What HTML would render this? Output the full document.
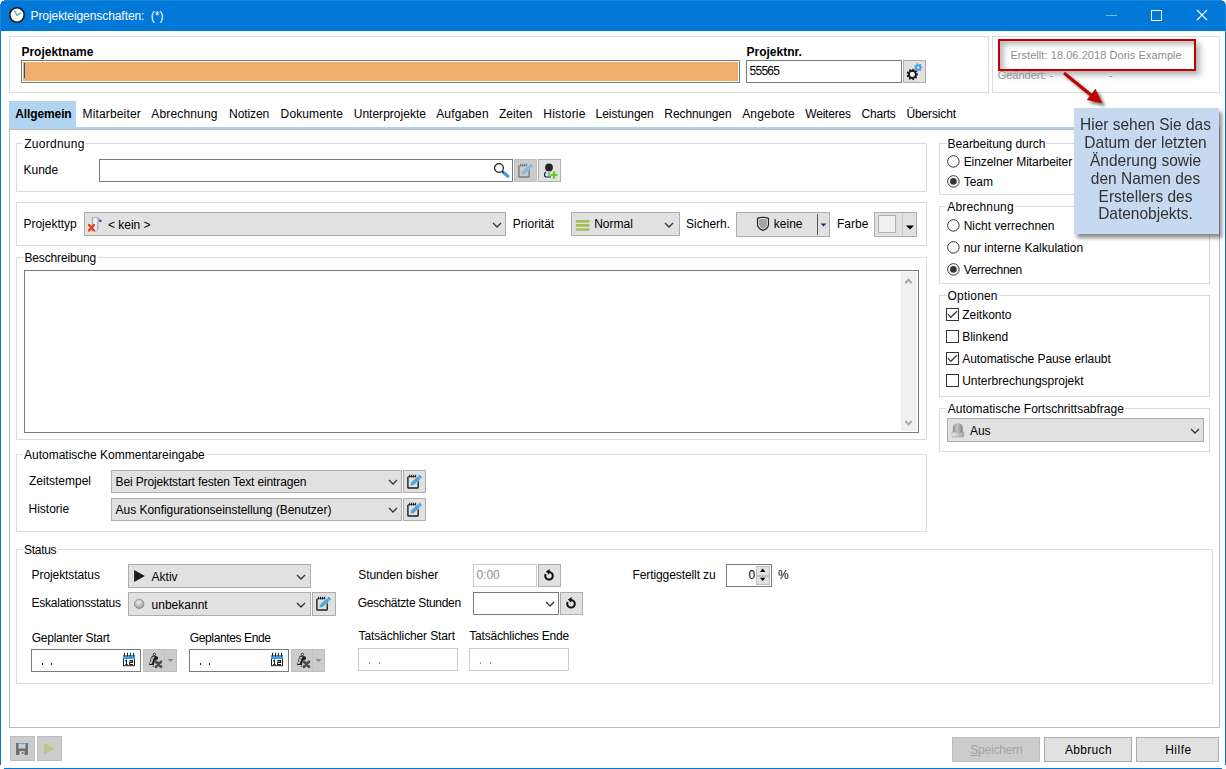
<!DOCTYPE html>
<html><head><meta charset="utf-8"><style>
html,body{margin:0;padding:0}
body{width:1226px;height:769px;position:relative;overflow:hidden;background:#fff;font-family:"Liberation Sans",sans-serif;font-size:12px;color:#000}
.a{position:absolute;box-sizing:border-box}
.t{position:absolute;white-space:pre;font-size:12px;line-height:12px}
svg{overflow:visible}
</style></head><body>
<div class="a" style="left:0px;top:0px;width:1226px;height:31px;background:#0078d7;border:1px solid #1b85d9;border-bottom:none;"></div>
<div class="a" style="left:0px;top:0px;width:4px;height:1px;background:#fff;"></div>
<div class="a" style="left:0px;top:1px;width:2px;height:1px;background:#fff;"></div>
<div class="a" style="left:0px;top:2px;width:1px;height:2px;background:#fff;"></div>
<div class="a" style="left:1222px;top:0px;width:4px;height:1px;background:#fff;"></div>
<div class="a" style="left:1224px;top:1px;width:2px;height:1px;background:#fff;"></div>
<div class="a" style="left:1225px;top:2px;width:1px;height:2px;background:#fff;"></div>
<div class="a" style="left:0px;top:31px;width:1px;height:734px;background:#0078d7;"></div>
<div class="a" style="left:1225px;top:31px;width:1px;height:734px;background:#0078d7;"></div>
<div class="a" style="left:4px;top:768px;width:1218px;height:1px;background:#0078d7;"></div>
<svg class="a" style="left:8px;top:6px" width="18" height="18" viewBox="0 0 18 18"><circle cx="9" cy="9" r="7.2" fill="#fff" stroke="#1a1a1a" stroke-width="1.6"/><path d="M6.3 4.6 L9 9.3 L12.8 6.9" fill="none" stroke="#4cb5ae" stroke-width="1.3"/></svg>
<div class="t" style="left:30.5px;top:10.04px;color:#fff;letter-spacing:-0.074px;">Projekteigenschaften:&nbsp; (*)</div>
<div class="a" style="left:1106px;top:15px;width:11px;height:1px;background:rgba(255,255,255,0.5);"></div>
<div class="a" style="left:1151px;top:10px;width:11px;height:11px;background:transparent;border:1px solid #fff;"></div>
<svg class="a" style="left:1196px;top:9px" width="12" height="12" viewBox="0 0 12 12"><path d="M1 1 L11 11 M11 1 L1 11" stroke="#fff" stroke-width="1.1"/></svg>
<div class="a" style="left:9px;top:36px;width:980px;height:57px;background:#fff;border:1px solid #dcdcdc;"></div>
<div class="t" style="left:21.4px;top:45.74px;font-weight:bold;">Projektname</div>
<div class="a" style="left:21px;top:60px;width:719px;height:23px;background:#fff;border:1px solid #7a7a7a;"></div>
<div class="a" style="left:23px;top:62px;width:715px;height:19px;background:#efae6c;"></div>
<div class="a" style="left:24px;top:63px;width:1px;height:15px;background:#1c4f9c;"></div>
<div class="t" style="left:746.5px;top:45.74px;font-weight:bold;">Projektnr.</div>
<div class="a" style="left:746px;top:60px;width:156px;height:23px;background:#fff;border:1px solid #7a7a7a;"></div>
<div class="t" style="left:749.5px;top:64.64px;letter-spacing:-0.717px;">55565</div>
<div class="a" style="left:903px;top:60px;width:23px;height:23px;background:#e1e1e1;border:1px solid #adadad;"></div>
<svg class="a" style="left:903px;top:60px" width="23" height="23" viewBox="0 0 23 23"><circle cx="9.3" cy="14.4" r="3.5" fill="none" stroke="#1e1e1e" stroke-width="2.2"/><path d="M12.80 14.40 L15.00 14.40" stroke="#1e1e1e" stroke-width="1.8"/><path d="M11.98 16.65 L13.67 18.06" stroke="#1e1e1e" stroke-width="1.8"/><path d="M9.91 17.85 L10.29 20.01" stroke="#1e1e1e" stroke-width="1.8"/><path d="M7.55 17.43 L6.45 19.34" stroke="#1e1e1e" stroke-width="1.8"/><path d="M6.01 15.60 L3.94 16.35" stroke="#1e1e1e" stroke-width="1.8"/><path d="M6.01 13.20 L3.94 12.45" stroke="#1e1e1e" stroke-width="1.8"/><path d="M7.55 11.37 L6.45 9.46" stroke="#1e1e1e" stroke-width="1.8"/><path d="M9.91 10.95 L10.29 8.79" stroke="#1e1e1e" stroke-width="1.8"/><path d="M11.98 12.15 L13.67 10.74" stroke="#1e1e1e" stroke-width="1.8"/><circle cx="9.3" cy="14.4" r="2.4" fill="#f4f4f4"/><circle cx="15.1" cy="7.5" r="2.05" fill="none" stroke="#3d9ee0" stroke-width="1.7"/><path d="M17.15 7.50 L19.20 7.50" stroke="#3d9ee0" stroke-width="1.6"/><path d="M16.38 9.10 L17.66 10.71" stroke="#3d9ee0" stroke-width="1.6"/><path d="M14.64 9.50 L14.19 11.50" stroke="#3d9ee0" stroke-width="1.6"/><path d="M13.25 8.39 L11.41 9.28" stroke="#3d9ee0" stroke-width="1.6"/><path d="M13.25 6.61 L11.41 5.72" stroke="#3d9ee0" stroke-width="1.6"/><path d="M14.64 5.50 L14.19 3.50" stroke="#3d9ee0" stroke-width="1.6"/><path d="M16.38 5.90 L17.66 4.29" stroke="#3d9ee0" stroke-width="1.6"/><circle cx="15.1" cy="7.5" r="1.2" fill="#e1e1e1"/></svg>
<div class="a" style="left:992px;top:36px;width:228px;height:57px;background:#fff;border:1px solid #dcdcdc;"></div>
<div class="a" style="left:998px;top:39px;width:198px;height:32px;background:transparent;border:2px solid #c00000;box-shadow:4px 4px 6px rgba(0,0,0,0.3), inset 4px 4px 5px rgba(0,0,0,0.25);"></div>
<div class="t" style="left:1010.4px;top:50.09px;font-size:11px;line-height:11px;color:#8e8e8e;letter-spacing:0.059px;">Erstellt: 18.06.2018 Doris Example</div>
<div class="t" style="left:997.7px;top:69.99px;font-size:11px;line-height:11px;color:#959595;">Geändert: -</div>
<div class="t" style="left:1109px;top:69.99px;font-size:11px;line-height:11px;color:#959595;">-</div>
<svg class="a" style="left:1050px;top:60px" width="70" height="60" viewBox="0 0 70 60"><defs><filter id="sh" x="-30%" y="-30%" width="160%" height="160%"><feGaussianBlur stdDeviation="1.6"/></filter></defs><g transform="translate(3,3)" opacity="0.5" filter="url(#sh)"><path d="M14 13 L41 35" stroke="#000" stroke-width="3"/><path d="M52.3 43.3 L45.5 28.7 L36.7 40.1 Z" fill="#000"/></g><path d="M14 13 L41 35" stroke="#c00000" stroke-width="3"/><path d="M52.3 43.3 L45.5 28.7 L36.7 40.1 Z" fill="#c00000"/></svg>
<div class="a" style="left:9px;top:101px;width:67px;height:28px;background:#b1d5f1;"></div>
<div class="a" style="left:76px;top:127px;width:1144px;height:2px;background:#aad3f0;"></div>
<div class="a" style="left:9px;top:129px;width:1211px;height:1px;background:#b9b9b9;"></div>
<div class="a" style="left:9px;top:129px;width:1px;height:599px;background:#bcbcbc;"></div>
<div class="a" style="left:1219px;top:129px;width:1px;height:599px;background:#bcbcbc;"></div>
<div class="a" style="left:9px;top:727px;width:1211px;height:1px;background:#bcbcbc;"></div>
<div class="t" style="left:15.3px;top:107.74px;font-weight:bold;letter-spacing:-0.118px;">Allgemein</div>
<div class="t" style="left:82.5px;top:107.74px;letter-spacing:0.152px;">Mitarbeiter</div>
<div class="t" style="left:151.3px;top:107.74px;letter-spacing:0.154px;">Abrechnung</div>
<div class="t" style="left:229.1px;top:107.74px;letter-spacing:-0.081px;">Notizen</div>
<div class="t" style="left:280.6px;top:107.74px;letter-spacing:0.117px;">Dokumente</div>
<div class="t" style="left:353.7px;top:107.74px;letter-spacing:0.022px;">Unterprojekte</div>
<div class="t" style="left:436.2px;top:107.74px;letter-spacing:0.146px;">Aufgaben</div>
<div class="t" style="left:498.9px;top:107.74px;letter-spacing:0.050px;">Zeiten</div>
<div class="t" style="left:543.3px;top:107.74px;letter-spacing:0.204px;">Historie</div>
<div class="t" style="left:595.6px;top:107.74px;letter-spacing:-0.057px;">Leistungen</div>
<div class="t" style="left:664.3px;top:107.74px;letter-spacing:-0.084px;">Rechnungen</div>
<div class="t" style="left:742.2px;top:107.74px;letter-spacing:0.174px;">Angebote</div>
<div class="t" style="left:805.3px;top:107.74px;letter-spacing:-0.218px;">Weiteres</div>
<div class="t" style="left:861.5px;top:107.74px;letter-spacing:-0.209px;">Charts</div>
<div class="t" style="left:906.4px;top:107.74px;letter-spacing:-0.123px;">Übersicht</div>
<div class="a" style="left:16px;top:143px;width:911px;height:49px;background:transparent;border:1px solid #dcdcdc;"></div>
<div class="t" style="left:23.2px;top:137.94px;background:#fff;padding:0 1px;letter-spacing:0.270px;">Zuordnung</div>
<div class="t" style="left:23.5px;top:163.64px;">Kunde</div>
<div class="a" style="left:99px;top:159px;width:414px;height:23px;background:#fff;border:1px solid #7a7a7a;"></div>
<svg class="a" style="left:492px;top:161px" width="17" height="18" viewBox="0 0 17 18"><circle cx="7" cy="7" r="4.4" fill="none" stroke="#1a1a1a" stroke-width="1.2"/><path d="M11.4 11.6 L15.9 15.2" stroke="#3d9ee0" stroke-width="3.2" stroke-linecap="round"/><path d="M10.1 10.1 L11.8 11.8" stroke="#1a1a1a" stroke-width="1.2"/></svg>
<div class="a" style="left:514px;top:159px;width:23px;height:23px;background:#cccccc;border:1px solid #bfbfbf;"></div>
<svg class="a" style="left:515px;top:160px" width="21" height="21" viewBox="0 0 21 21"><path d="M3.9 6 L3.9 16.2 Q3.9 17 4.7 17 L13.4 17 Q14.2 17 14.2 16.2 L14.2 9" fill="none" stroke="#7a7a7a" stroke-width="1.4"/><path d="M3.9 5.6 L11 5.6" stroke="#7a7a7a" stroke-width="0.8"/><path d="M5.6 3.8 L5.6 6.4 M7.6 3.8 L7.6 6.4 M9.6 3.8 L9.6 6.4 M11.6 3.8 L11.6 6.4" stroke="#7a7a7a" stroke-width="1.1"/><path d="M6.2 14.8 L7.1 11.3 L15.6 3.4 L18.3 6.3 L9.8 14.2 Z" fill="#82b4dc" stroke="#cccccc" stroke-width="0.6"/><path d="M13.9 5.2 L16.5 8" stroke="#cccccc" stroke-width="0.8"/><path d="M8.6 12.6 L13.8 7.8" stroke="#cccccc" stroke-width="0.6" stroke-dasharray="1 1"/></svg>
<div class="a" style="left:538px;top:159px;width:23px;height:23px;background:#e1e1e1;border:1px solid #adadad;"></div>
<svg class="a" style="left:539px;top:160px" width="21" height="21" viewBox="0 0 21 21"><circle cx="10" cy="7.4" r="3.9" fill="#222"/><path d="M7 12 C5 12.8 5 16.6 7.2 17" fill="none" stroke="#222" stroke-width="1.3"/><path d="M7.2 17 L12 17" stroke="#222" stroke-width="1"/><path d="M10 11.6 L10 17.4" stroke="#4aa3e0" stroke-width="1.2"/><path d="M15 11.6 L15 18.4 M11.6 15 L18.4 15" stroke="#5ccf0f" stroke-width="2.2"/></svg>
<div class="a" style="left:16px;top:202px;width:911px;height:44px;background:transparent;border:1px solid #dcdcdc;"></div>
<div class="t" style="left:23.4px;top:218.24px;">Projekttyp</div>
<div class="a" style="left:84px;top:212px;width:422px;height:24px;background:#e1e1e1;border:1px solid #adadad;"></div>
<svg class="a" style="left:84px;top:212px" width="24" height="24" viewBox="0 0 24 24"><defs><linearGradient id="pp" x1="0" x2="1"><stop offset="0" stop-color="#cfd0e6"/><stop offset="0.5" stop-color="#ffffff"/><stop offset="1" stop-color="#a8a9c8"/></linearGradient></defs><path d="M8.5 5.8 C10.5 5 13 5.2 15 6.5 L14.2 9 L13.6 17.5 C13.2 18.8 12 19 11 18.6 L8 18.4 Z" fill="url(#pp)" stroke="#8e90b6" stroke-width="0.7"/><ellipse cx="16.3" cy="8.8" rx="1.5" ry="1.4" fill="#5a5c8c"/><path d="M5 13 L10 18.5 M10 13 L5 18.5" stroke="#e4421a" stroke-width="2.4" stroke-linecap="round"/></svg>
<div class="t" style="left:107.9px;top:218.54px;">&lt; kein &gt;</div>
<svg class="a" style="left:491.5px;top:221.5px" width="10" height="6" viewBox="0 0 10 6"><path d="M1 1 L5 5 L9 1" fill="none" stroke="#333" stroke-width="1.25"/></svg>
<div class="t" style="left:512.8px;top:217.94px;">Priorität</div>
<div class="a" style="left:571px;top:212px;width:109px;height:24px;background:#e1e1e1;border:1px solid #adadad;"></div>
<svg class="a" style="left:571px;top:212px" width="24" height="24" viewBox="0 0 24 24"><path d="M5.8 9.4 L17.4 9.4 M5.8 13.4 L17.4 13.4 M5.8 17.5 L17.4 17.5" stroke="#9fc258" stroke-width="2.6" stroke-linecap="round"/></svg>
<div class="t" style="left:594.2px;top:218.14px;">Normal</div>
<svg class="a" style="left:664px;top:221.5px" width="10" height="6" viewBox="0 0 10 6"><path d="M1 1 L5 5 L9 1" fill="none" stroke="#333" stroke-width="1.25"/></svg>
<div class="t" style="left:686.1px;top:217.64px;">Sicherh.</div>
<div class="a" style="left:736px;top:212px;width:94px;height:25px;background:#e1e1e1;border:1px solid #adadad;"></div>
<div class="a" style="left:817px;top:214px;width:1px;height:21px;background:#555;"></div>
<svg class="a" style="left:750px;top:212px" width="24" height="24" viewBox="0 0 24 24"><path d="M7.6 6.3 Q13 4.4 18.4 6.3 L18.4 12.8 Q18.4 16.2 13 18.4 Q7.6 16.2 7.6 12.8 Z" fill="#fff" stroke="#222" stroke-width="1.3"/><path d="M9.1 7.4 Q13 6.1 16.9 7.4 L16.9 12.7 Q16.9 15.2 13 17 Q9.1 15.2 9.1 12.7 Z" fill="#a2a2a2"/></svg>
<div class="t" style="left:773.8px;top:218.24px;">keine</div>
<svg class="a" style="left:820px;top:222px" width="7" height="5" viewBox="0 0 7 5"><path d="M0.5 1.5 L6.5 1.5 L3.5 4.5 Z" fill="#1f2a8a"/></svg>
<div class="t" style="left:837px;top:217.64px;">Farbe</div>
<div class="a" style="left:874px;top:212px;width:43px;height:25px;background:#e1e1e1;border:1px solid #adadad;"></div>
<div class="a" style="left:878px;top:215px;width:18px;height:18px;background:#f0f0f0;border:1px solid #b0b0b0;"></div>
<div class="a" style="left:902px;top:213px;width:1px;height:23px;background:#c8c8c8;"></div>
<svg class="a" style="left:905px;top:224px" width="10" height="6" viewBox="0 0 10 6"><path d="M1 1.5 L9 1.5 L5 5.5 Z" fill="#000"/></svg>
<div class="a" style="left:16px;top:257px;width:911px;height:183px;background:transparent;border:1px solid #dcdcdc;"></div>
<div class="t" style="left:23.5px;top:251.74px;background:#fff;padding:0 1px;letter-spacing:-0.153px;">Beschreibung</div>
<div class="a" style="left:24px;top:270px;width:895px;height:163px;background:#fff;border:1px solid #7a7a7a;"></div>
<div class="a" style="left:901px;top:272px;width:16px;height:159px;background:#f0f0f0;"></div>
<svg class="a" style="left:903px;top:276px" width="11" height="9" viewBox="0 0 11 9"><path d="M2.4 7.2 L5.5 3.8 L8.6 7.2" fill="none" stroke="#a6a6a6" stroke-width="2"/></svg>
<svg class="a" style="left:903px;top:419px" width="11" height="9" viewBox="0 0 11 9"><path d="M2.4 2 L5.5 5.4 L8.6 2" fill="none" stroke="#ababab" stroke-width="2"/></svg>
<div class="a" style="left:16px;top:454px;width:911px;height:78px;background:transparent;border:1px solid #dcdcdc;"></div>
<div class="t" style="left:23px;top:448.84px;background:#fff;padding:0 1px;">Automatische Kommentareingabe</div>
<div class="t" style="left:29px;top:474.64px;">Zeitstempel</div>
<div class="a" style="left:111px;top:470px;width:291px;height:23px;background:#e1e1e1;border:1px solid #adadad;"></div>
<div class="t" style="left:115.6px;top:475.84px;letter-spacing:-0.137px;">Bei Projektstart festen Text eintragen</div>
<svg class="a" style="left:388px;top:478.5px" width="10" height="6" viewBox="0 0 10 6"><path d="M1 1 L5 5 L9 1" fill="none" stroke="#333" stroke-width="1.25"/></svg>
<div class="a" style="left:403px;top:470px;width:23px;height:23px;background:#e1e1e1;border:1px solid #adadad;"></div>
<svg class="a" style="left:404px;top:471px" width="21" height="21" viewBox="0 0 21 21"><path d="M3.9 6 L3.9 16.2 Q3.9 17 4.7 17 L13.4 17 Q14.2 17 14.2 16.2 L14.2 9" fill="none" stroke="#1e1e1e" stroke-width="1.4"/><path d="M3.9 5.6 L11 5.6" stroke="#1e1e1e" stroke-width="0.8"/><path d="M5.6 3.8 L5.6 6.4 M7.6 3.8 L7.6 6.4 M9.6 3.8 L9.6 6.4 M11.6 3.8 L11.6 6.4" stroke="#1e1e1e" stroke-width="1.1"/><path d="M6.2 14.8 L7.1 11.3 L15.6 3.4 L18.3 6.3 L9.8 14.2 Z" fill="#3d9ee0" stroke="#e1e1e1" stroke-width="0.6"/><path d="M13.9 5.2 L16.5 8" stroke="#e1e1e1" stroke-width="0.8"/><path d="M8.6 12.6 L13.8 7.8" stroke="#e1e1e1" stroke-width="0.6" stroke-dasharray="1 1"/></svg>
<div class="t" style="left:28.5px;top:502.54px;">Historie</div>
<div class="a" style="left:111px;top:498px;width:291px;height:23px;background:#e1e1e1;border:1px solid #adadad;"></div>
<div class="t" style="left:115.6px;top:503.84px;letter-spacing:-0.043px;">Aus Konfigurationseinstellung (Benutzer)</div>
<svg class="a" style="left:388px;top:506.5px" width="10" height="6" viewBox="0 0 10 6"><path d="M1 1 L5 5 L9 1" fill="none" stroke="#333" stroke-width="1.25"/></svg>
<div class="a" style="left:403px;top:498px;width:23px;height:23px;background:#e1e1e1;border:1px solid #adadad;"></div>
<svg class="a" style="left:404px;top:499px" width="21" height="21" viewBox="0 0 21 21"><path d="M3.9 6 L3.9 16.2 Q3.9 17 4.7 17 L13.4 17 Q14.2 17 14.2 16.2 L14.2 9" fill="none" stroke="#1e1e1e" stroke-width="1.4"/><path d="M3.9 5.6 L11 5.6" stroke="#1e1e1e" stroke-width="0.8"/><path d="M5.6 3.8 L5.6 6.4 M7.6 3.8 L7.6 6.4 M9.6 3.8 L9.6 6.4 M11.6 3.8 L11.6 6.4" stroke="#1e1e1e" stroke-width="1.1"/><path d="M6.2 14.8 L7.1 11.3 L15.6 3.4 L18.3 6.3 L9.8 14.2 Z" fill="#3d9ee0" stroke="#e1e1e1" stroke-width="0.6"/><path d="M13.9 5.2 L16.5 8" stroke="#e1e1e1" stroke-width="0.8"/><path d="M8.6 12.6 L13.8 7.8" stroke="#e1e1e1" stroke-width="0.6" stroke-dasharray="1 1"/></svg>
<div class="a" style="left:16px;top:549px;width:1197px;height:135px;background:transparent;border:1px solid #dcdcdc;"></div>
<div class="t" style="left:23px;top:543.54px;background:#fff;padding:0 1px;letter-spacing:-0.284px;">Status</div>
<div class="t" style="left:31.6px;top:568.74px;letter-spacing:-0.089px;">Projektstatus</div>
<div class="a" style="left:128px;top:564px;width:183px;height:24px;background:#e1e1e1;border:1px solid #adadad;"></div>
<svg class="a" style="left:128px;top:564px" width="24" height="24" viewBox="0 0 24 24"><path d="M6.1 6.1 L16.9 12 L6.1 17.9 Z" fill="#1a1a1a"/></svg>
<div class="t" style="left:151.6px;top:571.04px;">Aktiv</div>
<svg class="a" style="left:296px;top:574px" width="10" height="6" viewBox="0 0 10 6"><path d="M1 1 L5 5 L9 1" fill="none" stroke="#333" stroke-width="1.25"/></svg>
<div class="t" style="left:31.6px;top:597.24px;letter-spacing:-0.249px;">Eskalationsstatus</div>
<div class="a" style="left:128px;top:592px;width:183px;height:24px;background:#e1e1e1;border:1px solid #adadad;"></div>
<svg class="a" style="left:128px;top:592px" width="24" height="24" viewBox="0 0 24 24"><defs><radialGradient id="ball" cx="45%" cy="35%" r="70%"><stop offset="0" stop-color="#f2f2f2"/><stop offset="1" stop-color="#8c8c8c"/></radialGradient></defs><circle cx="11.2" cy="11.9" r="4.7" fill="url(#ball)" stroke="#808080" stroke-width="0.7"/></svg>
<div class="t" style="left:151.6px;top:598.64px;">unbekannt</div>
<svg class="a" style="left:296px;top:602px" width="10" height="6" viewBox="0 0 10 6"><path d="M1 1 L5 5 L9 1" fill="none" stroke="#333" stroke-width="1.25"/></svg>
<div class="a" style="left:312px;top:592px;width:24px;height:24px;background:#e1e1e1;border:1px solid #adadad;"></div>
<svg class="a" style="left:313px;top:593px" width="21" height="21" viewBox="0 0 21 21"><path d="M3.9 6 L3.9 16.2 Q3.9 17 4.7 17 L13.4 17 Q14.2 17 14.2 16.2 L14.2 9" fill="none" stroke="#1e1e1e" stroke-width="1.4"/><path d="M3.9 5.6 L11 5.6" stroke="#1e1e1e" stroke-width="0.8"/><path d="M5.6 3.8 L5.6 6.4 M7.6 3.8 L7.6 6.4 M9.6 3.8 L9.6 6.4 M11.6 3.8 L11.6 6.4" stroke="#1e1e1e" stroke-width="1.1"/><path d="M6.2 14.8 L7.1 11.3 L15.6 3.4 L18.3 6.3 L9.8 14.2 Z" fill="#3d9ee0" stroke="#e1e1e1" stroke-width="0.6"/><path d="M13.9 5.2 L16.5 8" stroke="#e1e1e1" stroke-width="0.8"/><path d="M8.6 12.6 L13.8 7.8" stroke="#e1e1e1" stroke-width="0.6" stroke-dasharray="1 1"/></svg>
<div class="t" style="left:31.7px;top:631.84px;letter-spacing:-0.234px;">Geplanter Start</div>
<div class="a" style="left:31px;top:649px;width:110px;height:23px;background:#fff;border:1px solid #7a7a7a;"></div>
<div class="a" style="left:42px;top:663px;width:1px;height:2px;background:#3a0a2a;"></div>
<div class="a" style="left:51px;top:663px;width:1px;height:2px;background:#3a0a2a;"></div>
<svg class="a" style="left:122px;top:651px" width="16" height="17" viewBox="0 0 16 17"><rect x="1.5" y="7.5" width="11" height="7.2" fill="#fff" stroke="#1e1e1e" stroke-width="1"/><rect x="1" y="4" width="12" height="4" fill="#3d9ee0"/><path d="M2.5 2.2 L2.5 5 M5.5 2.2 L5.5 5 M8.4 2.2 L8.4 5 M11.5 2.2 L11.5 5" stroke="#1e1e1e" stroke-width="1" stroke-linecap="round"/><path d="M3.3 10 L4.5 9.3 L4.5 13.5 M3.3 13.5 L5.7 13.5 M7.4 9.6 L10.6 9.6 L10.6 11.4 L7.6 11.4 L7.6 13.5 L11 13.5" fill="none" stroke="#1e1e1e" stroke-width="1.1"/></svg>
<div class="a" style="left:143px;top:649px;width:34px;height:23px;background:#cccccc;border:1px solid #bfbfbf;"></div>
<div class="a" style="left:164px;top:650px;width:1px;height:21px;background:#c4c4c4;"></div>
<svg class="a" style="left:143px;top:649px" width="21" height="23" viewBox="0 0 21 23"><path d="M9.8 6.6 C11.5 6.2 14 7 15 8.2 L15 10.2 L12 11.6 L10.8 15.9 L6 15.9 C6.5 14.5 7 12 7.6 10 C8.2 8 8.8 7 9.8 6.6 Z" fill="#1e1e1e"/><path d="M9.6 7.9 C8.8 9.2 8.2 12 7.3 15" stroke="#d8d8d8" stroke-width="1" fill="none"/><path d="M11.2 7.5 C10 9.2 9.1 12 8.4 14.6" stroke="#fff" stroke-width="0.9" fill="none"/><circle cx="11.4" cy="5.4" r="1.1" fill="#fff" stroke="#1e1e1e" stroke-width="0.9"/><circle cx="10.3" cy="17.2" r="0.6" fill="#1e1e1e"/><path d="M13 12.8 L18 17.8 M18 12.8 L13 17.8" stroke="#4d4d4d" stroke-width="2.8" stroke-linecap="round"/></svg>
<svg class="a" style="left:167px;top:658px" width="7" height="5" viewBox="0 0 7 5"><path d="M0.5 1 L6.5 1 L3.5 4 Z" fill="#8a8a8a"/></svg>
<div class="t" style="left:189.8px;top:631.84px;letter-spacing:-0.374px;">Geplantes Ende</div>
<div class="a" style="left:189px;top:649px;width:100px;height:23px;background:#fff;border:1px solid #7a7a7a;"></div>
<div class="a" style="left:200px;top:663px;width:1px;height:2px;background:#3a0a2a;"></div>
<div class="a" style="left:209px;top:663px;width:1px;height:2px;background:#3a0a2a;"></div>
<svg class="a" style="left:270px;top:651px" width="16" height="17" viewBox="0 0 16 17"><rect x="1.5" y="7.5" width="11" height="7.2" fill="#fff" stroke="#1e1e1e" stroke-width="1"/><rect x="1" y="4" width="12" height="4" fill="#3d9ee0"/><path d="M2.5 2.2 L2.5 5 M5.5 2.2 L5.5 5 M8.4 2.2 L8.4 5 M11.5 2.2 L11.5 5" stroke="#1e1e1e" stroke-width="1" stroke-linecap="round"/><path d="M3.3 10 L4.5 9.3 L4.5 13.5 M3.3 13.5 L5.7 13.5 M7.4 9.6 L10.6 9.6 L10.6 11.4 L7.6 11.4 L7.6 13.5 L11 13.5" fill="none" stroke="#1e1e1e" stroke-width="1.1"/></svg>
<div class="a" style="left:291px;top:649px;width:34px;height:23px;background:#cccccc;border:1px solid #bfbfbf;"></div>
<div class="a" style="left:312px;top:650px;width:1px;height:21px;background:#c4c4c4;"></div>
<svg class="a" style="left:291px;top:649px" width="21" height="23" viewBox="0 0 21 23"><path d="M9.8 6.6 C11.5 6.2 14 7 15 8.2 L15 10.2 L12 11.6 L10.8 15.9 L6 15.9 C6.5 14.5 7 12 7.6 10 C8.2 8 8.8 7 9.8 6.6 Z" fill="#1e1e1e"/><path d="M9.6 7.9 C8.8 9.2 8.2 12 7.3 15" stroke="#d8d8d8" stroke-width="1" fill="none"/><path d="M11.2 7.5 C10 9.2 9.1 12 8.4 14.6" stroke="#fff" stroke-width="0.9" fill="none"/><circle cx="11.4" cy="5.4" r="1.1" fill="#fff" stroke="#1e1e1e" stroke-width="0.9"/><circle cx="10.3" cy="17.2" r="0.6" fill="#1e1e1e"/><path d="M13 12.8 L18 17.8 M18 12.8 L13 17.8" stroke="#4d4d4d" stroke-width="2.8" stroke-linecap="round"/></svg>
<svg class="a" style="left:315px;top:658px" width="7" height="5" viewBox="0 0 7 5"><path d="M0.5 1 L6.5 1 L3.5 4 Z" fill="#8a8a8a"/></svg>
<div class="t" style="left:358.2px;top:568.94px;letter-spacing:-0.048px;">Stunden bisher</div>
<div class="a" style="left:473px;top:564px;width:64px;height:23px;background:#fff;border:1px solid #cccccc;"></div>
<div class="t" style="left:476.4px;top:568.94px;color:#8f8f8f;">0:00</div>
<div class="a" style="left:538px;top:564px;width:23px;height:23px;background:#e1e1e1;border:1px solid #adadad;"></div>
<svg class="a" style="left:538px;top:564px" width="22" height="22" viewBox="0 0 22 22"><path d="M11 8 A3.8 3.8 0 1 1 7.71 9.9" fill="none" stroke="#111" stroke-width="2"/><path d="M7.9 7.5 L11.8 5 L11.1 10.7 Z" fill="#111"/></svg>
<div class="t" style="left:357.7px;top:596.84px;letter-spacing:-0.314px;">Geschätzte Stunden</div>
<div class="a" style="left:473px;top:592px;width:86px;height:23px;background:#fff;border:1px solid #7a7a7a;"></div>
<svg class="a" style="left:545px;top:600.5px" width="10" height="6" viewBox="0 0 10 6"><path d="M1 1 L5 5 L9 1" fill="none" stroke="#333" stroke-width="1.25"/></svg>
<div class="a" style="left:560px;top:592px;width:23px;height:23px;background:#e1e1e1;border:1px solid #adadad;"></div>
<svg class="a" style="left:560px;top:592px" width="22" height="22" viewBox="0 0 22 22"><path d="M11 8 A3.8 3.8 0 1 1 7.71 9.9" fill="none" stroke="#111" stroke-width="2"/><path d="M7.9 7.5 L11.8 5 L11.1 10.7 Z" fill="#111"/></svg>
<div class="t" style="left:358.6px;top:629.64px;letter-spacing:-0.128px;">Tatsächlicher Start</div>
<div class="a" style="left:358px;top:648px;width:100px;height:23px;background:#fff;border:1px solid #cccccc;"></div>
<div class="a" style="left:369px;top:662px;width:1px;height:2px;background:#a0a0a0;"></div>
<div class="a" style="left:379px;top:662px;width:1px;height:2px;background:#a0a0a0;"></div>
<div class="t" style="left:469.3px;top:629.64px;letter-spacing:-0.205px;">Tatsächliches Ende</div>
<div class="a" style="left:469px;top:648px;width:100px;height:23px;background:#fff;border:1px solid #cccccc;"></div>
<div class="a" style="left:480px;top:662px;width:1px;height:2px;background:#a0a0a0;"></div>
<div class="a" style="left:490px;top:662px;width:1px;height:2px;background:#a0a0a0;"></div>
<div class="t" style="left:632.5px;top:569.14px;letter-spacing:-0.094px;">Fertiggestellt zu</div>
<div class="a" style="left:726px;top:564px;width:46px;height:23px;background:#fff;border:1px solid #7a7a7a;"></div>
<div class="t" style="left:748.6px;top:569.14px;">0</div>
<div class="a" style="left:756px;top:566px;width:14px;height:10px;background:#e1e1e1;border:1px solid #c0c0c0;"></div>
<div class="a" style="left:756px;top:576px;width:14px;height:9px;background:#e1e1e1;border:1px solid #c0c0c0;"></div>
<svg class="a" style="left:756px;top:566px" width="14" height="19" viewBox="0 0 14 19"><path d="M4 6 L9.4 6 L6.7 2.6 Z M4 11.7 L9.4 11.7 L6.7 15.1 Z" fill="#000"/></svg>
<div class="t" style="left:777.9px;top:569.14px;">%</div>
<div class="a" style="left:939px;top:143px;width:271px;height:52px;background:transparent;border:1px solid #dcdcdc;"></div>
<div class="t" style="left:946.6px;top:137.94px;background:#fff;padding:0 1px;letter-spacing:-0.017px;">Bearbeitung durch</div>
<svg class="a" style="left:0px;top:0px" width="1" height="1" viewBox="0 0 1 1"><circle cx="953.4" cy="161.4" r="5.75" fill="#fff" stroke="#333" stroke-width="1"/></svg>
<div class="t" style="left:963.7px;top:156.04px;letter-spacing:-0.077px;">Einzelner Mitarbeiter</div>
<svg class="a" style="left:0px;top:0px" width="1" height="1" viewBox="0 0 1 1"><circle cx="953.4" cy="181.4" r="5.75" fill="#fff" stroke="#333" stroke-width="1"/><circle cx="953.4" cy="181.4" r="3.3" fill="#333"/></svg>
<div class="t" style="left:963.7px;top:176.04px;">Team</div>
<div class="a" style="left:939px;top:206px;width:271px;height:78px;background:transparent;border:1px solid #dcdcdc;"></div>
<div class="t" style="left:946.3px;top:200.74px;background:#fff;padding:0 1px;letter-spacing:0.176px;">Abrechnung</div>
<svg class="a" style="left:0px;top:0px" width="1" height="1" viewBox="0 0 1 1"><circle cx="953.4" cy="225.4" r="5.75" fill="#fff" stroke="#333" stroke-width="1"/></svg>
<div class="t" style="left:963.7px;top:219.64px;">Nicht verrechnen</div>
<svg class="a" style="left:0px;top:0px" width="1" height="1" viewBox="0 0 1 1"><circle cx="953.4" cy="247.4" r="5.75" fill="#fff" stroke="#333" stroke-width="1"/></svg>
<div class="t" style="left:963.7px;top:241.74px;">nur interne Kalkulation</div>
<svg class="a" style="left:0px;top:0px" width="1" height="1" viewBox="0 0 1 1"><circle cx="953.4" cy="269.4" r="5.75" fill="#fff" stroke="#333" stroke-width="1"/><circle cx="953.4" cy="269.4" r="3.3" fill="#333"/></svg>
<div class="t" style="left:963.7px;top:263.54px;letter-spacing:-0.309px;">Verrechnen</div>
<div class="a" style="left:939px;top:295px;width:271px;height:102px;background:transparent;border:1px solid #dcdcdc;"></div>
<div class="t" style="left:946.6px;top:289.54px;background:#fff;padding:0 1px;letter-spacing:0.171px;">Optionen</div>
<svg class="a" style="left:946px;top:308px" width="13" height="13" viewBox="0 0 13 13"><rect x="0.5" y="0.5" width="12" height="12" fill="#fff" stroke="#333" stroke-width="1"/><path d="M1.9 6.1 L4.8 9.3 L11 3.3" fill="none" stroke="#3a3a3a" stroke-width="1.25"/></svg>
<div class="t" style="left:962.2px;top:309.44px;">Zeitkonto</div>
<svg class="a" style="left:946px;top:330px" width="13" height="13" viewBox="0 0 13 13"><rect x="0.5" y="0.5" width="12" height="12" fill="#fff" stroke="#333" stroke-width="1"/></svg>
<div class="t" style="left:962.2px;top:331.44px;">Blinkend</div>
<svg class="a" style="left:946px;top:352px" width="13" height="13" viewBox="0 0 13 13"><rect x="0.5" y="0.5" width="12" height="12" fill="#fff" stroke="#333" stroke-width="1"/><path d="M1.9 6.1 L4.8 9.3 L11 3.3" fill="none" stroke="#3a3a3a" stroke-width="1.25"/></svg>
<div class="t" style="left:962.2px;top:353.44px;letter-spacing:-0.060px;">Automatische Pause erlaubt</div>
<svg class="a" style="left:946px;top:374px" width="13" height="13" viewBox="0 0 13 13"><rect x="0.5" y="0.5" width="12" height="12" fill="#fff" stroke="#333" stroke-width="1"/></svg>
<div class="t" style="left:962.2px;top:375.44px;">Unterbrechungsprojekt</div>
<div class="a" style="left:939px;top:408px;width:271px;height:44px;background:transparent;border:1px solid #dcdcdc;"></div>
<div class="t" style="left:946.8px;top:402.84px;background:#fff;padding:0 1px;">Automatische Fortschrittsabfrage</div>
<div class="a" style="left:947px;top:418px;width:257px;height:24px;background:#e1e1e1;border:1px solid #adadad;"></div>
<svg class="a" style="left:947px;top:418px" width="22" height="22" viewBox="0 0 22 22"><defs><linearGradient id="lg" x1="0" x2="1"><stop offset="0" stop-color="#8f8f8f"/><stop offset="0.45" stop-color="#c4c4c4"/><stop offset="1" stop-color="#858585"/></linearGradient><linearGradient id="lg2" x1="0" x2="1"><stop offset="0" stop-color="#f0f0f0"/><stop offset="1" stop-color="#a0a0a0"/></linearGradient></defs><path d="M5.8 15 L5.8 10 C5.8 3.5 15.8 3.5 15.8 10 L15.8 15 Z" fill="url(#lg)"/><path d="M5 14.2 L16.9 14.2 L16.9 17.5 Q16.9 18.9 15.5 18.9 L6.4 18.9 Q5 18.9 5 17.5 Z" fill="url(#lg2)" stroke="#9a9a9a" stroke-width="0.6"/></svg>
<div class="t" style="left:969.9px;top:425.34px;">Aus</div>
<svg class="a" style="left:1190px;top:428px" width="10" height="6" viewBox="0 0 10 6"><path d="M1 1 L5 5 L9 1" fill="none" stroke="#333" stroke-width="1.25"/></svg>
<div class="a" style="left:1074px;top:108px;width:145px;height:126px;background:#c6d9f0;box-shadow:3px 4px 4px rgba(0,0,0,0.45)"></div>
<div class="a" style="left:1072.5px;top:108px;width:145px;height:126px;font-size:16.2px;line-height:17.78px;color:#333;text-align:center;padding-top:8.4px;transform:scaleX(0.957);transform-origin:50% 0">Hier sehen Sie das<br>Datum der letzten<br>Änderung sowie<br>den Namen des<br>Erstellers des<br>Datenobjekts.</div>
<div class="a" style="left:10px;top:736px;width:25px;height:25px;background:#cccccc;border:1px solid #bfbfbf;"></div>
<svg class="a" style="left:10px;top:736px" width="25" height="25" viewBox="0 0 25 25"><path d="M6 7 L18 7 L18 19 L6 19 Z" fill="#707070"/><rect x="8.5" y="7" width="7" height="5.5" fill="#cccccc"/><rect x="8.5" y="7" width="7" height="1" fill="#5aa7dc"/><rect x="9.5" y="15" width="5" height="4" fill="#cccccc"/><rect x="12" y="16" width="1.5" height="2" fill="#707070"/></svg>
<div class="a" style="left:37px;top:736px;width:25px;height:25px;background:#cccccc;border:1px solid #bfbfbf;"></div>
<svg class="a" style="left:37px;top:736px" width="25" height="25" viewBox="0 0 25 25"><path d="M7 7 L18 12.5 L7 18.5 Z" fill="#b5c98c"/></svg>
<div class="a" style="left:952px;top:737px;width:88px;height:25px;background:#cccccc;border:1px solid #bfbfbf;"></div>
<div class="t" style="left:970.3px;top:743.74px;color:#a3a3a3;letter-spacing:-0.204px;"><u>S</u>peichern</div>
<div class="a" style="left:1044px;top:737px;width:88px;height:25px;background:#e1e1e1;border:1px solid #adadad;"></div>
<div class="t" style="left:1065px;top:743.64px;letter-spacing:0.317px;">Abbruch</div>
<div class="a" style="left:1136px;top:737px;width:83px;height:25px;background:#e1e1e1;border:1px solid #adadad;"></div>
<div class="t" style="left:1165.2px;top:743.64px;letter-spacing:0.499px;">Hilfe</div>
</body></html>
